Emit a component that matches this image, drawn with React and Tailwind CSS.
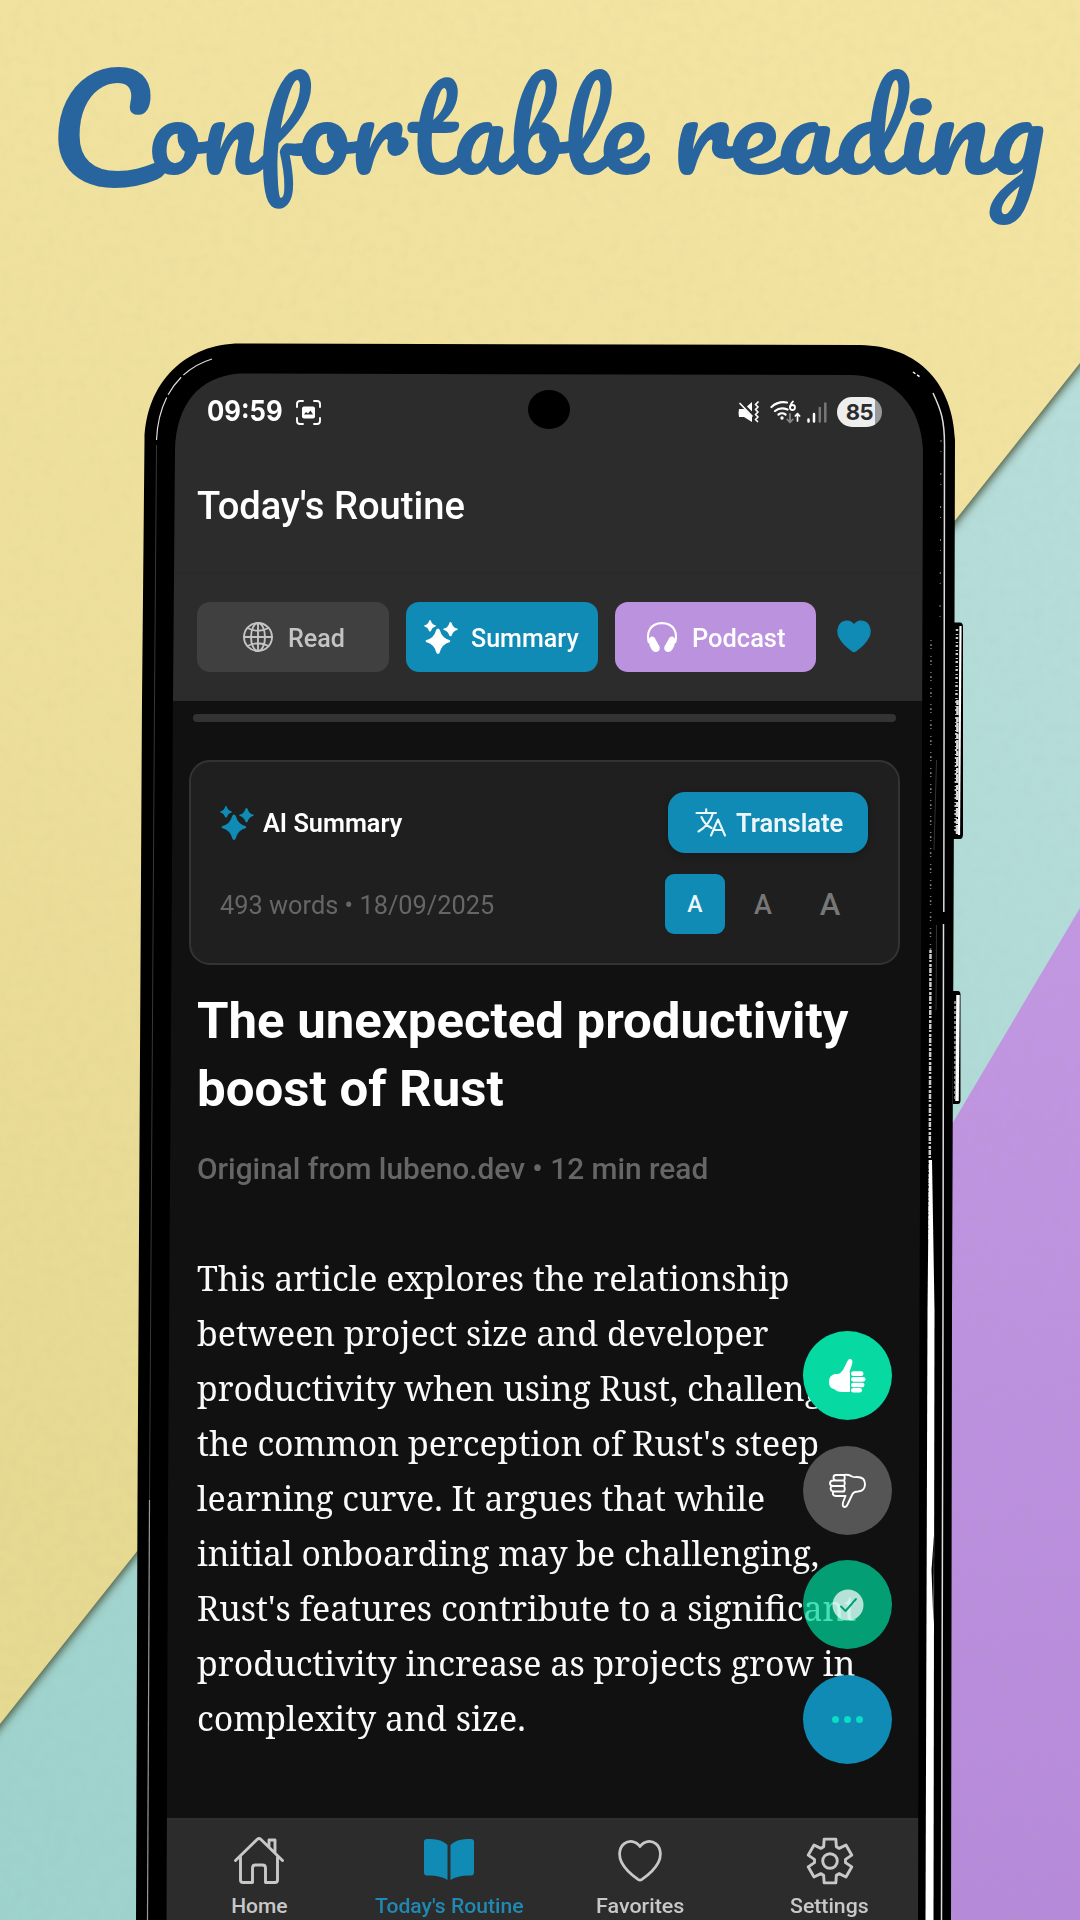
import { useLayoutEffect, useRef, useState } from "react";

// Stretches one line of text to the requested width.
function Fit({ w, className = "", origin = "origin-left", children }) {
  const ref = useRef(null);
  const [scale, setScale] = useState(1);
  useLayoutEffect(() => {
    if (ref.current) setScale(w / ref.current.offsetWidth);
  }, [w]);
  return (
    <span className="block shrink-0" style={{ width: w }}>
      <span ref={ref} className={`inline-block whitespace-nowrap ${origin} ${className}`} style={{ transform: `scaleX(${scale})` }}>
        {children}
      </span>
    </span>
  );
}

function PaperBackdrop() {
  return (
    <svg className="absolute inset-0 h-full w-full" viewBox="0 0 1080 1920">
      <defs>
        <linearGradient id="yellow" gradientUnits="userSpaceOnUse" x1="700" y1="0" x2="0" y2="1500">
          <stop offset="0" stopColor="#f3e4a1" />
          <stop offset="0.55" stopColor="#eddf9b" />
          <stop offset="1" stopColor="#e6d991" />
        </linearGradient>
        <linearGradient id="teal" x1="1" y1="0" x2="0" y2="1">
          <stop offset="0" stopColor="#badfdc" />
          <stop offset="1" stopColor="#9dd2cd" />
        </linearGradient>
        <linearGradient id="purple" x1="0" y1="0" x2="0" y2="1">
          <stop offset="0" stopColor="#c297e2" />
          <stop offset="1" stopColor="#b68ada" />
        </linearGradient>
        <filter id="soft" x="-5%" y="-5%" width="110%" height="110%">
          <feGaussianBlur stdDeviation="4" />
        </filter>
        <filter id="grain" x="0" y="0" width="100%" height="100%">
          <feTurbulence type="fractalNoise" baseFrequency="0.09" numOctaves="3" />
          <feColorMatrix values="0 0 0 0 0.4  0 0 0 0 0.4  0 0 0 0 0.3  0 0 0 0.9 -0.35" />
        </filter>
      </defs>
      <rect width="1080" height="1920" fill="url(#teal)" />
      <path d="M1080 908 L900 1212 V1920 H1080 Z" fill="url(#purple)" />
      <path d="M-20 -20 H1100 V342 L-20 1753 Z" fill="#45533a" filter="url(#soft)" />
      <path d="M0 0 H1080 V363 L0 1724 Z" fill="url(#yellow)" />
      <rect width="1080" height="1920" filter="url(#grain)" opacity="0.13" />
    </svg>
  );
}

function PhoneFrame() {
  return (
    <svg className="pointer-events-none absolute inset-0 h-full w-full" viewBox="0 0 1080 1920">
      <path
        fillRule="evenodd"
        fill="#000"
        d="M136 1925 L137.5 1500 L142 700 L144.5 440 C146 382 186 343.5 240 343.5 L860 345 C920 346 953 385 955 440 L954 800 L952 1310 L951 1925 Z
           M166.5 1925 H918 L919.5 1310 L922 750 L923 450 C921 405 893 376 852 375 L240 373.5 C199 376 176 405 175 450 L173 700 L168 1500 Z"
      />
      <path d="M147.500 1920 L149.500 1500" fill="none" stroke="#999" strokeWidth="1.200" />
      <path d="M149.500 1500 L154.500 700 L156.500 445" fill="none" stroke="#383838" strokeWidth="1" />
      <path d="M156.500 440 C158 402 176 370 212 359" fill="none" stroke="#ddd" strokeWidth="1.200" strokeDasharray="44 3 22 3" />
      <path d="M933 393 C941 410 944.500 420 944.500 445 L943.800 912" fill="none" stroke="#ddd" strokeWidth="1.500" />
      <path d="M943.500 924 L943 1310 L941.500 1920" fill="none" stroke="#ddd" strokeWidth="1.500" />
      <path d="M913 372 l7 5" stroke="#fff" strokeWidth="1.500" strokeDasharray="3 2" />
      <path d="M941 440 L940 620" fill="none" stroke="#888" strokeWidth="1" strokeDasharray="2 9 1 21" />
      <path d="M931 640 L930.500 950" fill="none" stroke="#777" strokeWidth="1.500" strokeDasharray="1 3 2 2 1 7" />
      <path d="M930.500 950 L929.500 1240" fill="none" stroke="#ccc" strokeWidth="2.500" strokeDasharray="3 1 5 1 2 2" />
      <path d="M929 1160 L932 1160 L934.500 1310 L933.500 1920 L925.500 1920 L927.500 1310 Z" fill="#fff" />
      <path d="M934 1535 L931.500 1570 L933.500 1625 Z" fill="#000" />
      <path d="M936.500 760 L934 850 M936.500 925 L936 1010" fill="none" stroke="#333" strokeWidth="1" />
      <path d="M953 622.500 H960 Q963 622.500 963 627 V834 Q963 839 960 839 H953 Z" fill="#000" />
      <path d="M960.500 626 L959 835" stroke="#fff" strokeWidth="2.200" />
      <path d="M957.500 700 L957 836" stroke="#ddd" strokeWidth="2.500" strokeDasharray="5 1 9 2" />
      <path d="M957 629 L955.500 834" stroke="#ccc" strokeWidth="2.500" strokeDasharray="2 3 1 2" />
      <path d="M953 991 H958 Q960.500 991 960.500 995 V1100 Q960.500 1104 958 1104 H953 Z" fill="#000" />
      <path d="M958 995 L957 1101" stroke="#fff" strokeWidth="3.500" />
      <path d="M955 1001 V1101" stroke="#aaa" strokeWidth="1.500" strokeDasharray="3 2" />
    </svg>
  );
}

const stroke = { fill: "none", stroke: "currentColor", strokeLinecap: "round", strokeLinejoin: "round" };

function Sparkles({ className }) {
  return (
    <svg className={className} viewBox="0 0 34 34" fill="currentColor">
      <path d="M14 8.500 Q15.300 8.500 15.800 10 Q18 18 25.500 20.100 Q27.300 21.200 25.500 22.200 Q18 24 15.800 32.300 Q15.300 34 14 34 Q12.700 34 12.200 32.300 Q10 24 2.500 22.200 Q0.500 21.200 2.500 20.100 Q10 18 12.200 10 Q12.700 8.500 14 8.500 Z" />
      <path d="M6 0 Q6.600 0 6.900 1 Q8 4.500 11.300 5.300 Q12.600 6 11.300 6.600 Q8 7.500 6.900 11 Q6 12.200 5.100 11 Q4 7.500 0.700 6.600 Q-0.500 6 0.700 5.300 Q4 4.500 5.100 1 Q5.400 0 6 0 Z" />
      <path d="M26.500 2 Q27.300 2 27.700 3.200 Q29 7.500 33 8.600 Q34.500 9.300 33 10.100 Q29 11.200 27.700 15.500 Q26.500 17.200 25.300 15.500 Q24 11.200 20 10.100 Q18.500 9.300 20 8.600 Q24 7.500 25.300 3.200 Q25.700 2 26.500 2 Z" />
    </svg>
  );
}

function Globe() {
  return (
    <svg className="h-[30px] w-[30px]" viewBox="0 0 30 30" {...stroke} strokeWidth="1.900">
      <circle cx="15" cy="15" r="14" />
      <ellipse cx="15" cy="15" rx="7" ry="14" />
      <path d="M15 1 V29 M1 15 H29 M4.500 6 Q15 11.500 25.500 6 M4.500 24 Q15 18.500 25.500 24" />
    </svg>
  );
}

function Headphones() {
  return (
    <svg className="h-[30px] w-[30px]" viewBox="0 0 30 30">
      <path d="M2 21 C-1 11 3 1.100 15 1.100 C27 1.100 31 11 28 21" fill="none" stroke="currentColor" strokeWidth="2.100" />
      <path d="M1.500 18 Q3.500 12.500 7.500 15.500 L12.500 24.500 Q13.500 29 10 29.800 Q7 30.500 5 28 Q2 24 1.500 18 Z M28.500 18 Q26.500 12.500 22.500 15.500 L17.500 24.500 Q16.500 29 20 29.800 Q23 30.500 25 28 Q28 24 28.500 18 Z" fill="currentColor" />
    </svg>
  );
}

function Heart({ className, outline }) {
  return (
    <svg className={className} viewBox="0 0 35 32">
      <path
        d="M17.500 5 C14.500 0.500 9 0 5.500 2.800 C1.500 6 1 12 3.500 17 C6 22 11 26.500 16 30 Q17.500 31 19 30 C24 26.500 29 22 31.500 17 C34 12 33.500 6 29.500 2.800 C26 0 20.500 0.500 17.500 5 Z"
        fill={outline ? "none" : "currentColor"}
        stroke="currentColor"
        strokeWidth={outline ? 2.1 : 1.4}
        strokeLinejoin="round"
      />
    </svg>
  );
}

function StatusBar() {
  return (
    <div className="flex h-[118px] items-start pt-[14px] pl-[42px] font-['Inter'] text-white">
      <div className="flex h-[52px] w-full items-center">
        <Fit w={76} className="text-[28px] leading-none font-bold">09:59</Fit>
        <svg className="ml-[13px] h-[25px] w-[25px]" viewBox="0 0 25 25">
          <path d="M1 7 V4 Q1 1 4 1 H7 M18 1 H21 Q24 1 24 4 V7 M24 18 V21 Q24 24 21 24 H18 M7 24 H4 Q1 24 1 21 V18" {...stroke} strokeWidth="1.900" />
          <rect x="6" y="6.500" width="13" height="12" rx="2" fill="#fff" />
          <path d="M8 14.500 L10 12 L12 13.500 L14.500 10.500 L17 14.500 Z" fill="#2c2c2c" />
        </svg>
        <div className="ml-[417px] flex items-center">
          <svg className="h-[22px] w-[22px]" viewBox="0 0 22 22">
            <path d="M1 8 H6 L14 1 V21 L6 16 H1 Q0 12 1 8" fill="#fff" />
            <path d="M2 1 L16 15" stroke="#2c2c2c" strokeWidth="3.500" />
            <path d="M2 2.500 L14 15" stroke="#fff" strokeWidth="1.700" strokeLinecap="round" />
            <path d="M20 1 l-2.500 2.500 2.500 2.500 -2.500 2.500 2.500 2.500 -2.500 2.500 2.500 2.500 -2.500 2.500 2 2" {...stroke} strokeWidth="1.700" />
          </svg>
          <svg className="ml-[10px] h-[24px] w-[31px]" viewBox="0 0 31 24">
            <path d="M1.500 7 Q8 1 17 2.500 M5 11 Q10.500 6.500 17.500 9.500 M8.500 14.500 Q12 12 15.500 14.500" {...stroke} strokeWidth="2.200" />
            <circle cx="12" cy="18" r="1.700" fill="#fff" />
            <circle cx="22.500" cy="7.500" r="2.500" {...stroke} strokeWidth="1.800" />
            <path d="M20 7 Q20.500 3.500 23 1.500" {...stroke} strokeWidth="1.800" />
            <path d="M20 14 V22 M17.300 19.500 L20 22.300 L22.700 19.500" {...stroke} stroke="#858585" strokeWidth="1.800" />
            <path d="M27.500 21 V14 M25.300 16 L27.500 13.700 L29.700 16" {...stroke} strokeWidth="1.700" />
          </svg>
          <svg className="ml-[6px] h-[21px] w-[20px]" viewBox="0 0 20 21" {...stroke} strokeWidth="2.500">
            <path d="M1.500 17.500 V19.500 M7 12 V19.500" />
            <path d="M12.800 6 V19.500 M18.300 1.500 V19.500" stroke="#777" />
          </svg>
          <div className="ml-[10px] flex h-[30px] w-[45px] items-center justify-center rounded-full bg-linear-to-r from-[#eee] from-84% to-[#999] to-84% text-[22px] leading-none font-bold tracking-[-0.5px] text-[#2c2c2c]">85</div>
        </div>
      </div>
    </div>
  );
}

function ModeTabs() {
  return (
    <div className="flex h-[129px] items-center border-t-2 border-[#292929] pb-[2px] pl-[32px] font-medium">
      <div className="flex h-[70px] w-[192px] items-center rounded-[13px] bg-[#404040] pl-[46px] text-[#c4c4c4]">
        <Globe />
        <Fit w={57} className="ml-[15px] mt-[3px] text-[26px]">Read</Fit>
      </div>
      <div className="ml-[17px] flex h-[70px] w-[192px] items-center rounded-[13px] bg-[#0f8bb5] pl-[18px] text-white">
        <Sparkles className="h-[34px] w-[34px]" />
        <Fit w={108} className="ml-[13px] mt-[3px] text-[26px]">Summary</Fit>
      </div>
      <div className="ml-[17px] flex h-[70px] w-[201px] items-center rounded-[13px] bg-[#bb92de] pl-[32px] text-white">
        <Headphones />
        <Fit w={93} className="ml-[15px] mt-[3px] text-[26px]">Podcast</Fit>
      </div>
      <Heart className="ml-[20px] h-[33px] w-[36px] text-[#0f8bb5]" />
    </div>
  );
}

function SummaryCard() {
  return (
    <section className="mt-[38px] ml-[24px] h-[205px] w-[711px] shrink-0 rounded-[21px] border-2 border-[#333] bg-[#1f1f1f] font-medium">
      <div className="flex h-[61px] mt-[30px] items-center pl-[29px]">
        <Sparkles className="h-[34px] w-[34px] text-[#0f8bb5]" />
        <Fit w={139} className="ml-[9px] mt-[2px] text-[26px] text-white font-semibold">AI Summary</Fit>
        <div className="ml-[275px] flex h-[61px] w-[200px] shrink-0 items-center rounded-[17px] bg-[#0f8bb5] pl-[27px] text-[#edf7fa] shadow-[0_2px_8px_rgba(0,0,0,.25)]">
          <svg className="h-[29px] w-[31px]" viewBox="0 0 31 29" {...stroke} strokeWidth="2.100">
            <path d="M1.500 5 H21 M11.200 1.200 V5 M18 5 Q14.500 17 3.500 23.500 M6.500 9 Q9.500 16.500 16.500 20 M16 27.500 L23 11.500 L30 27.500 M18.500 22 H27.500" />
          </svg>
          <Fit w={107} className="ml-[10px] mt-[2px] text-[26px] font-semibold">Translate</Fit>
        </div>
      </div>
      <div className="mt-[21px] flex h-[60px] items-center pl-[29px]">
        <Fit w={274} className="mt-[2px] text-[26px] font-[450] text-[#666]">493 words • 18/09/2025</Fit>
        <div className="ml-[171px] flex h-[60px] w-[60px] items-center justify-center rounded-[9px] bg-[#0f8bb5] pt-[3px] text-[23px] text-[#edf7fa]">A</div>
        <span className="ml-[8px] w-[60px] pt-[3px] text-center text-[27px] text-[#777]">A</span>
        <span className="ml-[7px] w-[60px] pt-[3px] text-center text-[31px] text-[#777]">A</span>
      </div>
    </section>
  );
}

const lines = [
  [592, "This article explores the relationship"],
  [571, "between project size and developer"],
  [675, "productivity when using Rust, challenging"],
  [621, "the common perception of Rust's steep"],
  [567, "learning curve. It argues that while"],
  [621, "initial onboarding may be challenging,"],
  [658, "Rust's features contribute to a significant"],
  [657, "productivity increase as projects grow in"],
  [328, "complexity and size."],
];

function Article() {
  return (
    <article className="ml-[32px]">
      <h1 className="mt-[22px] text-[50px] leading-[68px] font-bold text-white">
        <Fit w={651}>The unexpected productivity</Fit>
        <Fit w={307}>boost of Rust</Fit>
      </h1>
      <div className="mt-[28px] text-[29px] leading-[36px] font-medium text-[#666]">
        <Fit w={511}>Original from lubeno.dev • 12 min read</Fit>
      </div>
      <div className="mt-[64px] font-['Noto_Serif',serif] text-[34px] leading-[55px] text-[#fafafa]">
        {lines.map(([w, t]) => (
          <Fit key={t} w={w + 1}>{t}</Fit>
        ))}
      </div>
    </article>
  );
}

const round = "flex h-[89px] w-[89px] items-center justify-center rounded-full";

function ActionButtons() {
  return (
    <div className="absolute top-[1331.400px] left-[803px] flex flex-col gap-[25.500px]">
      <div className={`${round} bg-[#07d9a3] text-white`}>
        <svg className="h-[34px] w-[37px]" viewBox="0 0 37 34" fill="currentColor">
          <path d="M21 33 H13 Q8 33 5 30 Q0 29 0 23 Q0 16 6 15 H9 Q12 14 14 11 L18.500 2 Q20.500 -1.500 23 1 Q24 3 22.500 7 L20.500 13 L21 14 Z" />
          <rect x="22" y="12.300" width="12.500" height="4.700" rx="2.350" />
          <rect x="22" y="18" width="14.500" height="4.700" rx="2.350" />
          <rect x="22" y="23.700" width="13.500" height="4.500" rx="2.250" />
          <rect x="22" y="29" width="11" height="4.400" rx="2.200" />
        </svg>
      </div>
      <div className={`${round} bg-[#555] text-white`}>
        <svg className="h-[35px] w-[37px]" viewBox="0 0 37 35" {...stroke} strokeWidth="1.900">
          <path d="M15 2 Q20 1 23 3.500 Q25 4.500 28 4 Q36 4 36 11 Q36 18 29 18.500 Q25 18.500 23.500 21 L18.500 31.500 Q16.500 35.500 14 33 Q13.300 31 14.500 28 L16.500 23 M15 2 H7 Q4.500 2 4.500 4.500 Q4.500 7.500 7 7.500 H15 M7 7.500 H4 Q1 7.500 1 10.300 Q1 13 4 13 H15 M4 13 Q1.500 13 1.700 16 Q2 18.500 5 18.500 H15 M5 18.500 Q3.500 19 4 21.500 Q5 23 7 23 H16.500 M15 2 Q16.500 5 15 7.500 Q16.500 10 15 13 Q16.500 16 15 18.500" />
        </svg>
      </div>
      <div className={`${round} bg-[#00d59d]/72`}>
        <svg className="h-[32px] w-[32px]" viewBox="0 0 32 32">
          <circle cx="16" cy="16" r="15.500" fill="#fff" opacity="0.7" />
          <path d="M9 17.500 L13.500 22 L24 10" fill="none" stroke="#009e76" strokeWidth="1.900" strokeLinecap="round" strokeLinejoin="round" />
        </svg>
      </div>
      <div className={`${round} gap-[5px] bg-[#0f8bb5]`}>
        <i className="h-[7px] w-[7px] rounded-full bg-[#09dcc7]" />
        <i className="h-[7px] w-[7px] rounded-full bg-[#09dcc7]" />
        <i className="h-[7px] w-[7px] rounded-full bg-[#09dcc7]" />
      </div>
    </div>
  );
}

const gearPoints = () => {
  let d = "";
  for (let i = 0; i < 6; i++) {
    const base = -90 + i * 60;
    [[-24, 15.6], [-15, 22.6], [15, 22.6], [24, 15.6]].forEach(([a, r], k) => {
      const t = ((base + a) * Math.PI) / 180;
      d += `${i === 0 && k === 0 ? "M" : "L"}${(24 + r * Math.cos(t)).toFixed(2)} ${(24 + r * Math.sin(t)).toFixed(2)} `;
    });
  }
  return d + "Z";
};

function BottomNav() {
  return (
    <nav className="flex h-[102px] w-[762px] -ml-[1px] border-t-2 border-[#303030] bg-[#2c2c2c] pt-[17px] pr-[1px] text-[21px] leading-[26px] font-medium text-[#c8c8c8]">
      <div className="flex flex-1 flex-col items-center">
        <svg className="h-[50px] w-[50px]" viewBox="0 0 50 50" {...stroke} strokeWidth="2.900">
          <path d="M1.500 23.500 L23 2.500 Q25 0.500 27 2.500 L48.500 23.500 M6.500 20 V43 Q6.500 45.500 9 45.500 H18.500 V31 Q18.500 28 21.500 28 H28.500 Q31.500 28 31.500 31 V45.500 H41 Q43.500 45.500 43.500 43 V20 M35 10 V3 H41 V16" />
        </svg>
        <Fit w={56} className="mt-[6px]">Home</Fit>
      </div>
      <div className="flex flex-1 flex-col items-center text-[#2089b3]">
        <svg className="h-[50px] w-[50px]" viewBox="0 0 50 50" fill="#0f8bb5">
          <path d="M23.500 8 V43 Q16 38 3 38.500 Q0 38.500 0 35.500 V4.500 Q0 2 3 2 Q17 1 23.500 8 Z M26.500 8 V43 Q34 38 47 38.500 Q50 38.500 50 35.500 V4.500 Q50 2 47 2 Q33 1 26.500 8 Z" />
        </svg>
        <Fit w={149} className="mt-[6px]">Today's Routine</Fit>
      </div>
      <div className="flex flex-1 flex-col items-center">
        <Heart outline className="mt-[3px] mb-[5px] h-[42px] w-[46px]" />
        <Fit w={88} className="mt-[6px]">Favorites</Fit>
      </div>
      <div className="flex flex-1 flex-col items-center">
        <svg className="h-[50px] w-[50px]" viewBox="0 0 50 50">
          <path d={gearPoints()} {...stroke} strokeWidth="2.900" transform="translate(1 0)" />
          <circle cx="25" cy="24" r="7.300" {...stroke} strokeWidth="2.900" />
        </svg>
        <Fit w={79} className="mt-[6px]">Settings</Fit>
      </div>
    </nav>
  );
}

export default function App() {
  return (
    <main className="relative h-[1920px] w-[1080px] overflow-hidden bg-[#ecdd99] font-['Roboto',sans-serif]">
      <PaperBackdrop />
      <header className="relative flex h-[372px] gap-[25px] pl-[49px] pt-[47px] font-['Pacifico',cursive] text-[112px] leading-[160px] text-[#28659f]">
        <Fit w={598}>
          <span className="align-[-13px] text-[140px] leading-none">C</span>onfortable
        </Fit>
        <Fit w={373}>reading</Fit>
      </header>
      <div className="relative ml-[165px] flex h-[1548px] w-[760px] flex-col overflow-hidden rounded-t-[60px] bg-[#111]">
        <div className="bg-[#2c2c2c]">
          <StatusBar />
          <div className="h-[82px] pl-[32px] text-[38px] leading-[32px] font-medium text-white">
            <Fit w={268}>Today's Routine</Fit>
          </div>
          <ModeTabs />
        </div>
        <div className="mt-[13px] ml-[28px] h-[8px] w-[703px] shrink-0 rounded-full bg-[#333]" />
        <SummaryCard />
        <Article />
        <div className="mt-auto">
          <BottomNav />
        </div>
      </div>
      <div className="absolute top-[390px] left-[528px] h-[39px] w-[42px] rounded-[50%] bg-black" />
      <ActionButtons />
      <PhoneFrame />
    </main>
  );
}
